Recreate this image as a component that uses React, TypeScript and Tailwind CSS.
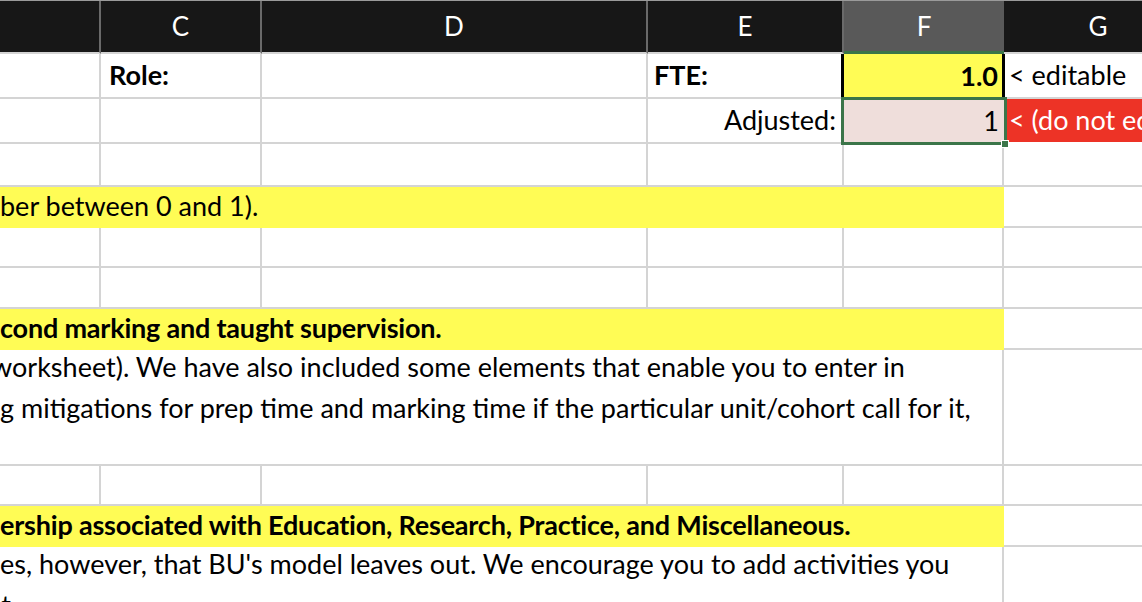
import React from 'react'

const cols = 'grid grid-cols-[101px_161px_386px_196px_160px_190px]'
const cell = 'border-r-2 border-b-2 border-[#d4d4d4]'
const yellow = 'bg-[#fffc55]'

const Empty = () => <div className={cell} />

function BlankRow({ h }: { h: string }) {
  return (
    <div className={`${cols} ${h}`}>
      <Empty />
      <Empty />
      <Empty />
      <Empty />
      <Empty />
      <Empty />
    </div>
  )
}

function BandRow({ h, text, bold, offset = '' }: { h: string; text: string; bold?: boolean; offset?: string }) {
  return (
    <div className={`${cols} ${h}`}>
      <div className={`col-span-5 ${yellow} flex items-center pb-[3px] overflow-hidden whitespace-nowrap`}>
        <span className={`${offset} ${bold ? 'font-bold tracking-[-0.2px]' : ''}`}>{text}</span>
      </div>
      <Empty />
    </div>
  )
}

function TextRow({ h, lines }: { h: string; lines: { text: string; offset?: string }[] }) {
  return (
    <div className={`${cols} ${h}`}>
      <div className={`col-span-5 ${cell} flex flex-col overflow-hidden whitespace-nowrap leading-[41px]`}>
        <div className="-mt-[4px] flex flex-col">
          {lines.map((l, i) => (
            <span key={i} className={l.offset}>
              {l.text}
            </span>
          ))}
        </div>
      </div>
      <Empty />
    </div>
  )
}

export default function App() {
  const letters = ['', 'C', 'D', 'E', 'F', 'G']
  return (
    <div className="w-[1142px] h-[602px] overflow-hidden bg-white text-black text-[27px] font-['Lato',sans-serif]">
      {/* column headers */}
      <div className={`${cols} h-[54px] bg-[#171717] border-t border-[#9a9a9a]`}>
        {letters.map((l) => (
          <div
            key={l || 'B'}
            className={
              l === 'F'
                ? 'flex items-center justify-center bg-[#595959] text-white text-[26px] border-b-[3px] border-[#3b7549]'
                : 'flex items-center justify-center text-white text-[26px] border-r-2 border-[#6a6a6a] border-b-2 border-b-[#d4d4d4]'
            }
          >
            {l}
          </div>
        ))}
      </div>

      {/* Role / FTE */}
      <div className={`${cols} h-[45px]`}>
        <Empty />
        <div className={`${cell} flex items-center pl-[8px] font-bold`}>Role:</div>
        <Empty />
        <div className={`${cell} flex items-center pl-[6px] font-bold`}>FTE:</div>
        <div className={`${yellow} flex items-center justify-end pr-[4px] font-bold border-x-[3px] border-black -ml-[3px] -mr-[1px]`}>
          1.0
        </div>
        <div className={`${cell} flex items-center pl-[5px] whitespace-nowrap`}>&lt; editable</div>
      </div>

      {/* Adjusted */}
      <div className={`${cols} h-[45px]`}>
        <Empty />
        <Empty />
        <Empty />
        <div className={`${cell} flex items-center justify-end pr-[6px]`}>Adjusted:</div>
        <div className="relative bg-[#efdedb] flex items-center justify-end pr-[5px]">
          1
          <div className="absolute -inset-x-[3px] -top-[2px] -bottom-[1px] border-[3px] border-[#3b7549]" />
          <div className="absolute -right-[5px] -bottom-[4px] w-[8px] h-[8px] bg-[#3b7549] border border-white" />
        </div>
        <div className="bg-[#ed3326] text-white flex items-center pl-[5px] whitespace-nowrap mb-[2px]">
          &lt; (do not edit)
        </div>
      </div>

      <BlankRow h="h-[43px]" />
      <BandRow h="h-[41px]" text="ber between 0 and 1)." />
      <BlankRow h="h-[40px]" />
      <BlankRow h="h-[41px]" />
      <BandRow h="h-[41px]" text="cond marking and taught supervision." bold />
      <TextRow
        h="h-[116px]"
        lines={[
          { text: 'worksheet). We have also included some elements that enable you to enter in', offset: '-ml-[9px]' },
          { text: 'g mitigations for prep time and marking time if the particular unit/cohort call for it,' },
        ]}
      />
      <BlankRow h="h-[40px]" />
      <BandRow h="h-[41px]" text="ership associated with Education, Research, Practice, and Miscellaneous." bold />
      <TextRow
        h="h-[80px]"
        lines={[
          { text: "es, however, that BU's model leaves out. We encourage you to add activities you" },
          { text: 'at.', offset: '-ml-[12px]' },
        ]}
      />
    </div>
  )
}
